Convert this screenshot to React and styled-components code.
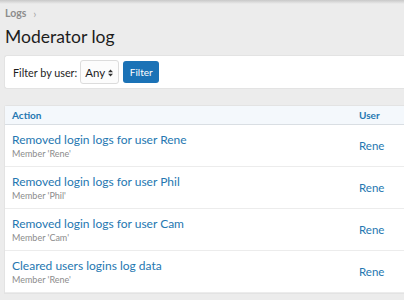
import React from "react";
import styled, { createGlobalStyle } from "styled-components";

const Global = createGlobalStyle`
  html, body { margin: 0; padding: 0; }
  body {
    background: #ececec;
    font-family: Lato, "Open Sans", sans-serif;
    width: 404px;
    height: 300px;
    overflow: hidden;
  }
`;

const Page = styled.div`
  position: relative;
  padding: 6px 0 0 4px;
  &::before {
    content: "";
    position: absolute;
    left: 0; right: 0; top: 0;
    height: 4px;
    background: linear-gradient(#c8c8c8, rgba(236,236,236,0));
  }
`;

const Breadcrumb = styled.div`
  display: flex;
  align-items: center;
  gap: 7px;
  padding-left: 1px;
  font-size: 10.5px;
  font-weight: 700;
  color: #8c8c8c;
  height: 14px;
`;

const Chevron = styled.span`
  font-weight: 400;
  font-size: 11px;
  color: #a6a6a6;
`;

const Title = styled.h1`
  margin: 5px 0 0 1px;
  font-size: 17.5px;
  font-weight: 400;
  color: #1d1d1d;
  line-height: 24px;
`;

const FilterBar = styled.div`
  margin-top: 6px;
  display: flex;
  align-items: center;
  gap: 3px;
  height: 32px;
  padding: 0 8px;
  background: #fff;
  border: 1px solid #e3e3e3;
  border-right: none;
  border-radius: 3px 0 0 3px;
`;

const Label = styled.span`
  font-size: 10.8px;
  color: #1d1d1d;
`;

const Select = styled.div`
  display: flex;
  align-items: center;
  justify-content: space-between;
  width: 39px;
  height: 24px;
  box-sizing: border-box;
  padding: 1px 5px 0 4px;
  border: 1px solid #dcdcdc;
  border-radius: 3px;
  background: #fcfcfc;
  font-size: 11.5px;
  color: #1d1d1d;
`;

const Arrows = styled.svg`
  width: 5px;
  height: 8px;
`;

const Button = styled.button`
  margin-left: 1px;
  height: 22px;
  width: 36px;
  padding: 0;
  border: none;
  border-radius: 3px;
  background: #1b72b6;
  color: #fff;
  font-family: inherit;
  font-size: 10px;
`;

const Table = styled.div`
  margin-top: 16px;
  background: #fff;
  border: 1px solid #e3e3e3;
  border-right: none;
  border-radius: 3px 0 0 0;
`;

const Row = styled.div`
  display: grid;
  grid-template-columns: 1fr 45px;
  align-items: center;
  height: ${(p) => p.$h}px;
  padding-left: 7px;
  border-bottom: 1px solid ${(p) => (p.$head ? "#d9dee3" : "#ececec")};
  background: ${(p) => (p.$head ? "#f4f8fc" : "#fff")};
`;

const HeadCell = styled.div`
  font-size: 10px;
  font-weight: 700;
  color: #2577b1;
`;

const Cell = styled.div`
  display: flex;
  flex-direction: column;
  gap: 1px;
`;

const Link = styled.span`
  font-size: 12px;
  color: #2577b1;
  line-height: 15px;
`;

const Sub = styled.span`
  font-size: 9px;
  color: #8c8c8c;
  line-height: 11px;
`;

const UserCell = styled.span`
  font-size: 11.5px;
  color: #2577b1;
`;

const rows = [
  ["Removed login logs for user Rene", "Member 'Rene'"],
  ["Removed login logs for user Phil", "Member 'Phil'"],
  ["Removed login logs for user Cam", "Member 'Cam'"],
  ["Cleared users logins log data", "Member 'Rene'"],
];

export default function App() {
  return (
    <>
      <Global />
      <Page>
        <Breadcrumb>
          Logs <Chevron>›</Chevron>
        </Breadcrumb>
        <Title>Moderator log</Title>
        <FilterBar>
          <Label>Filter by user:</Label>
          <Select>
            Any
            <Arrows viewBox="0 0 5 8">
              <path d="M0 3.2 L2.5 0.4 L5 3.2Z M0 4.8 L2.5 7.6 L5 4.8Z" fill="#333" />
            </Arrows>
          </Select>
          <Button>Filter</Button>
        </FilterBar>
        <Table>
          <Row $head $h={18}>
            <HeadCell>Action</HeadCell>
            <HeadCell>User</HeadCell>
          </Row>
          {rows.map(([t, s]) => (
            <Row key={t} $h={41}>
              <Cell>
                <Link>{t}</Link>
                <Sub>{s}</Sub>
              </Cell>
              <UserCell>Rene</UserCell>
            </Row>
          ))}
        </Table>
      </Page>
    </>
  );
}
